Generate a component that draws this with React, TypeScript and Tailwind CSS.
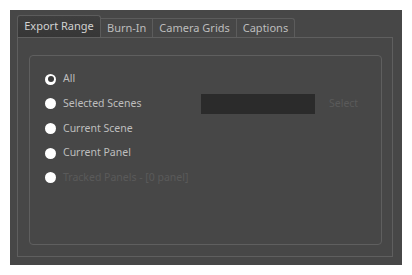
type Option = { label: string; selected?: boolean; disabled?: boolean; field?: boolean };

const options: Option[] = [
  { label: "All", selected: true },
  { label: "Selected Scenes", field: true },
  { label: "Current Scene" },
  { label: "Current Panel" },
  { label: "Tracked Panels - [0 panel]", disabled: true },
];

const tabs = ["Export Range", "Burn-In", "Camera Grids", "Captions"];

const Radio = ({ selected }: { selected?: boolean }) => (
  <span className="w-[11px] h-[11px] rounded-full bg-white flex items-center justify-center shrink-0">
    {selected && <span className="w-[6px] h-[6px] rounded-full bg-[#3a3a3a]" />}
  </span>
);

export default function App() {
  return (
    <div className="w-[412px] h-[275px] bg-white p-[10px] font-['Noto_Sans',sans-serif] text-[11px]">
      <div className="w-[392px] h-[255px] bg-[#474747] pt-[5px] pl-[7px] pr-[9px]">
        <div className="flex items-end h-[22px]">
          {tabs.map((t, i) =>
            i === 0 ? (
              <div
                key={t}
                className="h-[22px] w-[84px] flex items-center justify-center rounded-t-[3px] border border-b-0 border-[#5c5c5c] bg-gradient-to-b from-[#3f3f3f] to-[#363636] text-[#d2d2d2]"
              >
                {t}
              </div>
            ) : (
              <div
                key={t}
                className={`h-[19px] flex items-center px-[6px] border-t border-r border-[#5c5c5c] text-[#bdbdbd] ${
                  i === tabs.length - 1 ? "rounded-tr-[3px]" : ""
                }`}
              >
                {t}
              </div>
            )
          )}
        </div>
        <div className="h-[220px] border border-[#5f5f5f] pt-[17px] pl-[11px] pr-[10px]">
          <div className="h-[190px] border border-[#5f5f5f] rounded-[4px] pt-[11px] pl-[15px] text-[10.5px]">
            {options.map((o) => (
              <div key={o.label} className="flex items-center h-[24.6px]">
                <Radio selected={o.selected} />
                <span
                  className={`ml-[7px] w-[138px] ${
                    o.disabled ? "text-[#5a5a5a]" : "text-[#bebebe]"
                  }`}
                >
                  {o.label}
                </span>
                {o.field && (
                  <>
                    <div className="w-[114px] h-[20px] bg-[#2b2b2b]" />
                    <span className="ml-[14px] text-[#5a5a5a]">Select</span>
                  </>
                )}
              </div>
            ))}
          </div>
        </div>
      </div>
    </div>
  );
}
